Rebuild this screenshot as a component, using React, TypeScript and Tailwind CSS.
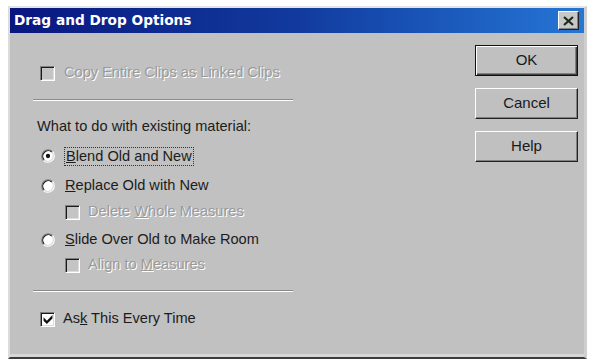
import React from "react"

const font = "font-['Liberation_Sans',Arial,sans-serif]"

function CheckBox({ checked, disabled }: { checked?: boolean; disabled?: boolean }) {
  return (
    <span
      className={`relative flex h-[15px] w-[15px] shrink-0 items-center justify-center border border-t-[#808080] border-l-[#808080] border-r-white border-b-white shadow-[inset_1px_1px_0_#1a1a1a,inset_-1px_-1px_0_#dcdcdc] ${
        disabled ? "bg-[#c4c4c4]" : "bg-white"
      }`}
    >
      {checked && (
        <svg width="10" height="10" viewBox="0 0 9 9">
          <path d="M0.5 3 L3.5 6 L8.5 1 L8.5 4 L3.5 9 L0.5 6 Z" fill="#111" />
        </svg>
      )}
    </span>
  )
}

function Radio({ checked }: { checked?: boolean }) {
  return (
    <svg width="14" height="14" viewBox="0 0 13 13" className="shrink-0">
      <circle cx="6.5" cy="6.5" r="5" fill="#fff" />
      <path d="M2.26 10.74 A6 6 0 0 1 10.74 2.26" stroke="#808080" fill="none" />
      <path d="M10.74 2.26 A6 6 0 0 1 2.26 10.74" stroke="#ffffff" fill="none" />
      <path d="M2.97 10.03 A5 5 0 0 1 10.03 2.97" stroke="#111" fill="none" />
      <path d="M10.03 2.97 A5 5 0 0 1 2.97 10.03" stroke="#dcdcdc" fill="none" />
      {checked && <circle cx="6.5" cy="6.5" r="2" fill="#111" />}
    </svg>
  )
}

function Separator({ className }: { className: string }) {
  return <div className={`h-[2px] w-[260px] border-t border-t-[#8a8a8a] border-b border-b-white ${className}`} />
}

function Disabled({ children }: { children: React.ReactNode }) {
  return <span className="text-[#9a9a9a] [text-shadow:1px_1px_0_#ffffff]">{children}</span>
}

function Btn({ label, primary }: { label: string; primary?: boolean }) {
  return (
    <button
      className={`flex h-[31px] w-[103px] items-center justify-center bg-[#c0c0c0] text-[15px] text-[#1a1a1a] ${font} ${
        primary
          ? "border border-[#111] shadow-[inset_1px_1px_0_#ffffff,inset_-1px_-1px_0_#404040,inset_-2px_-2px_0_#808080]"
          : "border border-t-white border-l-white border-r-[#222] border-b-[#222] shadow-[inset_-1px_-1px_0_#808080]"
      }`}
    >
      {label}
    </button>
  )
}

export default function App() {
  return (
    <div className="flex h-[359px] w-[590px] bg-white pl-[8px] pr-[3px] pt-[6px]">
      <div className="flex flex-1 flex-col border-l-2 border-t-2 border-r-[3px] border-l-[#dcdcdc] border-t-[#e4e4e4] border-r-[#cfcfcf] border-b-[2px] border-b-[#3c3c3c] bg-[#c1c1c1] shadow-[inset_0_-3px_0_#d6d6d6]">
        {/* barra de título */}
        <div className="flex h-[25px] items-center justify-between bg-linear-to-r from-[#0a1680] via-[#123a9e] to-[#2676d6] pl-[4px] pr-[5px]">
          <span className="font-['DejaVu_Sans',sans-serif] text-[13.7px] font-bold text-white">Drag and Drop Options</span>
          <span className="flex h-[19px] w-[21px] items-center justify-center border border-t-white border-l-white border-r-[#222] border-b-[#222] bg-[#c8c8c8] shadow-[inset_-1px_-1px_0_#808080]">
            <svg width="11" height="10" viewBox="0 0 11 10">
              <path d="M1 1 L10 9 M10 1 L1 9" stroke="#1a2a1a" strokeWidth="2.2" />
            </svg>
          </span>
        </div>

        <div className={`flex flex-1 text-[14.6px] text-[#1c1c1c] ${font}`}>
          {/* opciones */}
          <div className="flex flex-1 flex-col pl-[30px] pt-[30px]">
            <div className="flex h-[20px] items-center gap-[9px]">
              <CheckBox disabled />
              <Disabled>Copy Entire Clips as Linked Clips</Disabled>
            </div>
            <Separator className="ml-[-7px] mt-[16px]" />
            <div className="ml-[-3px] mt-[16px] flex h-[20px] items-center">What to do with existing material:</div>
            <div className="mt-[9px] flex h-[20px] items-center gap-[9px] pl-[1px]">
              <Radio checked />
              <span className="border border-dotted border-[#333] px-[1px] leading-[17px]">
                <u>B</u>lend Old and New
              </span>
            </div>
            <div className="mt-[10px] flex h-[20px] items-center gap-[10px] pl-[1px]">
              <Radio />
              <span>
                <u>R</u>eplace Old with New
              </span>
            </div>
            <div className="mt-[6px] flex h-[20px] items-center gap-[8px] pl-[25px]">
              <CheckBox disabled />
              <Disabled>
                Delete <u>W</u>hole Measures
              </Disabled>
            </div>
            <div className="mt-[8px] flex h-[20px] items-center gap-[10px] pl-[1px]">
              <Radio />
              <span>
                <u>S</u>lide Over Old to Make Room
              </span>
            </div>
            <div className="mt-[5px] flex h-[20px] items-center gap-[8px] pl-[25px]">
              <CheckBox disabled />
              <Disabled>
                Align to <u>M</u>easures
              </Disabled>
            </div>
            <Separator className="ml-[-7px] mt-[15px]" />
            <div className="mt-[17px] flex h-[20px] items-center gap-[8px]">
              <CheckBox checked />
              <span>
                As<u>k</u> This Every Time
              </span>
            </div>
          </div>

          {/* botones */}
          <div className="mr-[6px] flex flex-col gap-[12px] pt-[12px]">
            <Btn label="OK" primary />
            <Btn label="Cancel" />
            <Btn label="Help" />
          </div>
        </div>
      </div>
    </div>
  )
}
